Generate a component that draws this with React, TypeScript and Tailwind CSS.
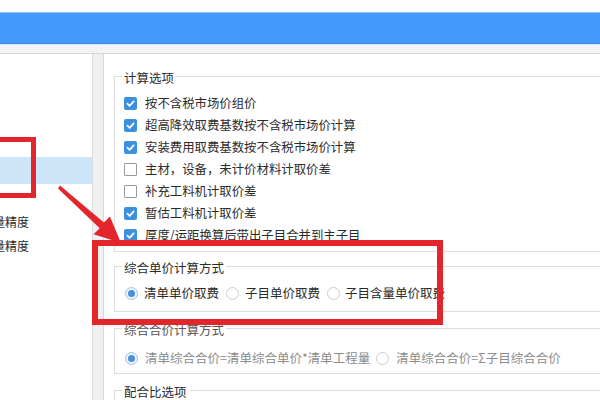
const checks = [
    { label: "按不含税市场价组价", on: true },
    { label: "超高降效取费基数按不含税市场价计算", on: true },
    { label: "安装费用取费基数按不含税市场价计算", on: true },
    { label: "主材，设备，未计价材料计取价差", on: false },
    { label: "补充工料机计取价差", on: false },
    { label: "暂估工料机计取价差", on: true },
    { label: "厚度/运距换算后带出子目合并到主子目", on: true },
]

function Check({ on }: { on: boolean }) {
    if (on) {
        return (
            <span className="flex h-[13px] w-[13px] items-center justify-center rounded-[2px] bg-[#3d8fe0]">
                <svg viewBox="0 0 12 12" className="h-[11px] w-[11px]">
                    <path d="M2.6 6.2 5 8.6 9.5 3.7" fill="none" stroke="white" strokeWidth="1.8" strokeLinecap="round" strokeLinejoin="round" />
                </svg>
            </span>
        )
    }
    return <span className="h-[13px] w-[13px] rounded-[1px] border border-[#9a9a9a] bg-white" />
}

function Radio({ on }: { on: boolean }) {
    return (
        <span className={on
            ? "flex h-[13px] w-[13px] items-center justify-center rounded-full border border-[#9cc3ea] bg-[#eef5fc]"
            : "flex h-[13px] w-[13px] items-center justify-center rounded-full border border-[#cdcdcd] bg-white"}>
            {on && <span className="h-[7px] w-[7px] rounded-full bg-[#4a90d9]" />}
        </span>
    )
}

function Legend({ text, dim }: { text: string, dim?: boolean }) {
    return (
        <legend className={dim
            ? "ml-[7px] px-[2px] pt-[4px] text-[12.5px] leading-[16px] text-[#555]"
            : "ml-[7px] px-[2px] pt-[4px] text-[12.5px] leading-[16px] text-[#2b2b2b]"}>
            {text}
        </legend>
    )
}

export default function App() {
    return (
        <div className="relative h-[400px] w-[600px] overflow-hidden bg-white font-['Noto_Sans_CJK_SC','Noto_Sans',sans-serif]">
            <div className="h-[12px] bg-[#fdfdfd]" />
            <div className="h-[32px] border-t border-b border-t-[#8fc3f7] border-b-[#3b87e2] bg-[#4599fd]" />
            <div className="h-[10px] border-t border-b border-t-[#d6edff] border-b-[#d8d8d8] bg-[#f3f3f3]" />

            <div className="flex h-[346px]">
                {/* left tree */}
                <div className="w-[93px] shrink-0 overflow-hidden border-r border-[#dedede] bg-white">
                    <div className="mt-[103px] h-[27px] bg-[#cde5f8]" />
                    <div className="mt-[26px] text-[12px] leading-[24px] text-[#2b2b2b]">
                        <div className="-ml-[55px] whitespace-nowrap">清单工程量精度</div>
                        <div className="-ml-[55px] whitespace-nowrap">定额工程量精度</div>
                    </div>
                </div>
                <div className="w-[10px] shrink-0 bg-[#f0f0f0]" />

                {/* right options */}
                <div className="flex-1 border-l border-[#d9d9d9] bg-white pl-[10px] pt-[12px]">
                    <fieldset className="w-[520px] border border-[#dcdcdc] pb-[5px]">
                        <Legend text="计算选项" />
                        <div className="mt-[6px] flex flex-col">
                            {checks.map((c, idx) => (
                                <div key={idx} className="flex h-[22px] items-center gap-[8px] pl-[9px] text-[12.4px] text-[#2b2b2b]">
                                    <Check on={c.on} />
                                    <span className="whitespace-nowrap">{c.label}</span>
                                </div>
                            ))}
                        </div>
                    </fieldset>

                    <fieldset className="mt-[4px] w-[520px] border border-[#dcdcdc] pb-[7px]">
                        <Legend text="综合单价计算方式" />
                        <div className="mt-[6px] flex h-[22px] items-center gap-[7px] pl-[10px] text-[12.5px] text-[#2b2b2b]">
                            <div className="flex items-center gap-[6px]"><Radio on={true} /><span>清单单价取费</span></div>
                            <div className="flex items-center gap-[6px]"><Radio on={false} /><span>子目单价取费</span></div>
                            <div className="flex items-center gap-[5px]"><Radio on={false} /><span>子目含量单价取费</span></div>
                        </div>
                    </fieldset>

                    <fieldset className="mt-[6px] w-[520px] border border-[#dcdcdc] pb-[4px]">
                        <Legend text="综合合价计算方式" dim />
                        <div className="mt-[9px] flex h-[22px] items-center gap-[6px] pl-[10px] text-[12.5px] text-[#8c8c8c]">
                            <div className="flex items-center gap-[7px]"><Radio on={true} /><span className="whitespace-nowrap">清单综合合价=清单综合单价*清单工程量</span></div>
                            <div className="flex items-center gap-[7px]"><Radio on={false} /><span className="whitespace-nowrap">清单综合合价=Σ子目综合合价</span></div>
                        </div>
                    </fieldset>

                    <fieldset className="mt-[6px] w-[520px] border border-[#dcdcdc]">
                        <Legend text="配合比选项" />
                        <div className="h-[30px]" />
                    </fieldset>
                </div>
            </div>

            {/* annotations */}
            <div className="pointer-events-none absolute left-[-10px] top-[137px] h-[61px] w-[46px] border-[5px] border-[#e3262b]" />
            <div className="pointer-events-none absolute left-[92px] top-[240px] h-[85px] w-[351px] border-[6px] border-[#e3262b]" />
            <svg className="pointer-events-none absolute left-[50px] top-[180px] h-[70px] w-[80px]" viewBox="50 180 80 70">
                <polygon
                    points="60,185.6 103.9,222.5 109.9,216.5 121,243 93.6,234.3 99.7,228.3 58,188.4"
                    fill="#e3262b"
                />
            </svg>
        </div>
    )
}
